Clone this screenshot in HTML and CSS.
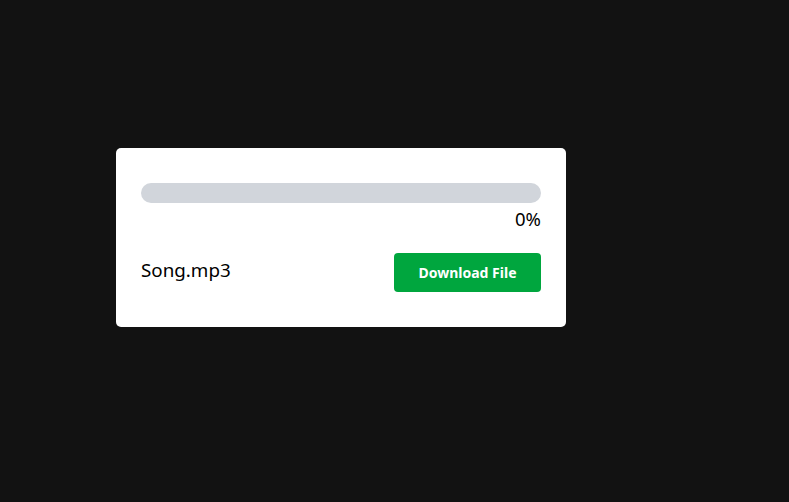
FILE: index.html
```html
<!DOCTYPE html>
<html>
<head>
<meta charset="utf-8">
<link rel="stylesheet" href="styles.css">
</head>
<body>
<div class="page">
  <div class="card">
    <div class="bar"><div class="fill" style="width:0%"></div></div>
    <div class="pct">0%</div>
    <div class="row">
      <span class="name">Song.mp3</span>
      <button class="btn">Download File</button>
    </div>
  </div>
</div>
</body>
</html>
```
FILE: styles.css
```css
html, body {
  margin: 0;
  padding: 0;
  background: #121212;
  height: 100%;
}
body {
  font-family: "Noto Sans", "Open Sans", sans-serif;
}
.page {
  padding: 148px 0 0 116px;
}
.card {
  width: 450px;
  box-sizing: border-box;
  background: #ffffff;
  border-radius: 5px;
  padding: 35px 25px;
}
.bar {
  height: 20px;
  background: #d1d5db;
  border-radius: 10px;
  overflow: hidden;
}
.fill {
  height: 100%;
  background: #00a63e;
}
.pct {
  text-align: right;
  font-size: 18.5px;
  line-height: 24px;
  margin-top: 4px;
  color: #000;
}
.row {
  display: flex;
  justify-content: space-between;
  align-items: center;
  margin-top: 22px;
}
.name {
  font-size: 18.8px;
  line-height: 24px;
  margin-bottom: 5px;
  color: #000;
}
.btn {
  font-family: inherit;
  background: #00a63e;
  color: #fff;
  border: none;
  border-radius: 4px;
  font-weight: 700;
  font-size: 14px;
  height: 39px;
  width: 147px;
  padding: 0;
}
```
